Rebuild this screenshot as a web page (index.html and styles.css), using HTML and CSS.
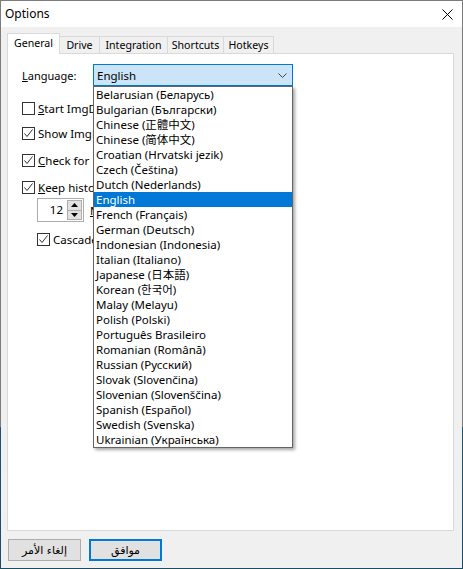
FILE: index.html
```html
<!DOCTYPE html>
<html lang="en">
<head>
<meta charset="utf-8">
<title>Options</title>
<link rel="stylesheet" href="styles.css">
</head>
<body>
<div class="frame">
  <div class="window">
    <div class="titlebar">
      <span class="title">Options</span>
      <svg class="close" width="11" height="11" viewBox="0 0 11 11"><path d="M0.5 0.5 L10.5 10.5 M10.5 0.5 L0.5 10.5" stroke="#000" stroke-width="1" fill="none"/></svg>
    </div>
    <div class="body">
      <div class="tabs">
        <div class="tab active w-general">General</div>
        <div class="tab w-drive">Drive</div>
        <div class="tab w-integration">Integration</div>
        <div class="tab w-shortcuts">Shortcuts</div>
        <div class="tab w-hotkeys">Hotkeys</div>
      </div>
      <div class="panel">
        <div class="lang-row">
          <span class="lang-label"><u>L</u>anguage:</span>
          <div class="combo-wrap">
            <div class="combo">
              <span>English</span>
              <svg class="chev" width="9" height="5" viewBox="0 0 9 5"><path d="M0.5 0.5 L4.5 4.5 L8.5 0.5" stroke="#444" stroke-width="1" fill="none"/></svg>
            </div>
            <ul class="dropdown">
              <li>Belarusian (Беларусь)</li>
              <li>Bulgarian (Български)</li>
              <li>Chinese (正體中文)</li>
              <li>Chinese (简体中文)</li>
              <li>Croatian (Hrvatski jezik)</li>
              <li>Czech (Čeština)</li>
              <li>Dutch (Nederlands)</li>
              <li class="sel">English</li>
              <li>French (Français)</li>
              <li>German (Deutsch)</li>
              <li>Indonesian (Indonesia)</li>
              <li>Italian (Italiano)</li>
              <li>Japanese (日本語)</li>
              <li>Korean (한국어)</li>
              <li>Malay (Melayu)</li>
              <li>Polish (Polski)</li>
              <li>Português Brasileiro</li>
              <li>Romanian (Română)</li>
              <li>Russian (Русский)</li>
              <li>Slovak (Slovenčina)</li>
              <li>Slovenian (Slovenščina)</li>
              <li>Spanish (Español)</li>
              <li>Swedish (Svenska)</li>
              <li>Ukrainian (Українська)</li>
            </ul>
          </div>
        </div>

        <div class="check r1"><span class="box"></span><span class="lbl"><u>S</u>tart ImgDrive</span></div>
        <div class="check r2"><span class="box on"><svg width="11" height="11" viewBox="0 0 11 11"><path d="M1.5 5.5 L4 8.5 L9.5 1.5" stroke="#333" stroke-width="1" fill="none"/></svg></span><span class="lbl">Show ImgDrive</span></div>
        <div class="check r3"><span class="box on"><svg width="11" height="11" viewBox="0 0 11 11"><path d="M1.5 5.5 L4 8.5 L9.5 1.5" stroke="#333" stroke-width="1" fill="none"/></svg></span><span class="lbl"><u>C</u>heck for</span></div>
        <div class="check r4"><span class="box on"><svg width="11" height="11" viewBox="0 0 11 11"><path d="M1.5 5.5 L4 8.5 L9.5 1.5" stroke="#333" stroke-width="1" fill="none"/></svg></span><span class="lbl"><u>K</u>eep history</span></div>

        <div class="spin-row">
          <div class="spin">
            <span class="spin-val">12</span>
            <div class="spin-btns">
              <span class="sb"><svg width="7" height="4" viewBox="0 0 7 4"><path d="M3.5 0 L7 4 L0 4 Z" fill="#000"/></svg></span>
              <span class="sb"><svg width="7" height="4" viewBox="0 0 7 4"><path d="M0 0 L7 0 L3.5 4 Z" fill="#000"/></svg></span>
            </div>
          </div>
          <span class="spin-lbl"><u>M</u></span>
        </div>

        <div class="check r5"><span class="box on"><svg width="11" height="11" viewBox="0 0 11 11"><path d="M1.5 5.5 L4 8.5 L9.5 1.5" stroke="#333" stroke-width="1" fill="none"/></svg></span><span class="lbl">Cascade</span></div>
      </div>
      <div class="footer">
        <button class="btn">إلغاء الأمر</button>
        <button class="btn default">موافق</button>
      </div>
    </div>
  </div>
</div>
</body>
</html>
```

FILE: styles.css
```css
html, body {
  margin: 0;
  padding: 0;
}
body {
  width: 463px;
  height: 569px;
  overflow: hidden;
  font-family: "Noto Sans", "Noto Sans CJK JP", "DejaVu Sans", sans-serif;
  font-size: 11px;
  color: #000;
}
.frame {
  box-sizing: border-box;
  width: 463px;
  height: 569px;
  padding: 1px;
  background: linear-gradient(to bottom, #7c7c7c 0, #7c7c7c 427px, #1c5470 427px, #1a4c66 100%);
}
.window {
  height: 567px;
  background: #f0f0f0;
  display: flex;
  flex-direction: column;
}
.titlebar {
  height: 26px;
  background: #fff;
  display: flex;
  align-items: center;
  justify-content: space-between;
  padding: 0 9px 0 4px;
  flex: none;
}
.title {
  font-size: 12px;
  line-height: 16px;
}
.close {
  display: block;
}
.body {
  flex: 1;
  display: flex;
  flex-direction: column;
  padding: 6px 8px 0 6px;
}
.tabs {
  display: flex;
  align-items: flex-end;
  height: 21px;
  margin-bottom: -1px;
  position: relative;
  z-index: 2;
}
.tab {
  box-sizing: border-box;
  height: 17px;
  margin-bottom: 1px;
  margin-left: -1px;
  border: 1px solid #d9d9d9;
  border-bottom: none;
  background: #f0f0f0;
  text-align: center;
  line-height: 16px;
  font-size: 10.6px;
}
.tab.active {
  height: 21px;
  margin-bottom: 0;
  margin-left: 0;
  background: #fff;
  line-height: 18px;
  position: relative;
  z-index: 3;
}
.w-general { width: 53px; }
.w-drive { width: 41px; }
.w-integration { width: 69px; }
.w-shortcuts { width: 57px; }
.w-hotkeys { width: 51px; }

.panel {
  box-sizing: border-box;
  height: 478px;
  background: #fff;
  border: 1px solid #d9d9d9;
  position: relative;
  z-index: 1;
  display: flex;
  flex-direction: column;
  align-items: flex-start;
}
.lang-row {
  display: flex;
  align-items: center;
  margin-top: 10px;
  padding-left: 14px;
  width: 100%;
  box-sizing: border-box;
}
.lang-label {
  width: 71px;
  flex: none;
}
.combo-wrap {
  position: relative;
  z-index: 5;
}
.combo {
  box-sizing: border-box;
  width: 200px;
  height: 22px;
  border: 1px solid #0078d7;
  background: #cce4f7;
  display: flex;
  align-items: center;
  justify-content: space-between;
  padding: 0 5px 0 3px;
  font-size: 11.5px;
}
.chev {
  display: block;
  margin-top: 1px;
}
.dropdown {
  position: absolute;
  left: 0;
  top: 22px;
  box-sizing: border-box;
  width: 200px;
  margin: 0;
  padding: 0;
  list-style: none;
  background: #fff;
  border: 1px solid #646464;
  box-shadow: 2px 2px 3px rgba(0, 0, 0, 0.35);
}
.dropdown li {
  height: 15px;
  line-height: 15px;
  padding-left: 2px;
  white-space: nowrap;
  font-size: 11.5px;
}
.dropdown li.sel {
  background: #0078d7;
  color: #fff;
}

.check {
  display: flex;
  align-items: center;
  height: 13px;
  padding-left: 14px;
  white-space: nowrap;
}
.r1 { margin-top: 16px; }
.r2 { margin-top: 12px; }
.r3 { margin-top: 14px; }
.r4 { margin-top: 14px; }
.r5 { margin-top: 11px; padding-left: 29px; }
.box {
  box-sizing: border-box;
  width: 13px;
  height: 13px;
  border: 1px solid #333;
  background: #fff;
  flex: none;
  display: flex;
  align-items: center;
  justify-content: center;
  margin-right: 3px;
}
.box svg { display: block; }
.lbl {
  font-size: 11.5px;
  line-height: 15px;
}

.spin-row {
  display: flex;
  align-items: center;
  margin-top: 4px;
  padding-left: 29px;
  white-space: nowrap;
}
.spin {
  box-sizing: border-box;
  width: 47px;
  height: 24px;
  border: 1px solid #adadad;
  display: flex;
  align-items: stretch;
  background: #fff;
}
.spin-val {
  flex: 1;
  text-align: right;
  padding-right: 4px;
  line-height: 22px;
  font-size: 11.5px;
}
.spin-btns {
  width: 15px;
  display: flex;
  flex-direction: column;
  padding: 1px 1px 1px 0;
}
.sb {
  flex: 1;
  box-sizing: border-box;
  border: 1px solid #adadad;
  background: #e1e1e1;
  display: flex;
  align-items: center;
  justify-content: center;
}
.sb + .sb { border-top: none; }
.sb svg { display: block; }
.spin-lbl {
  margin-left: 6px;
  font-size: 11.5px;
}

.footer {
  display: flex;
  gap: 8px;
  padding-top: 8px;
  padding-left: 1px;
}
.btn {
  box-sizing: border-box;
  width: 73px;
  height: 22px;
  margin: 0;
  padding: 0;
  border: 1px solid #adadad;
  background: #e1e1e1;
  font-family: "DejaVu Sans", sans-serif;
  font-size: 11px;
  color: #000;
  direction: rtl;
}
.btn.default {
  border: 2px solid #0078d7;
}
```
